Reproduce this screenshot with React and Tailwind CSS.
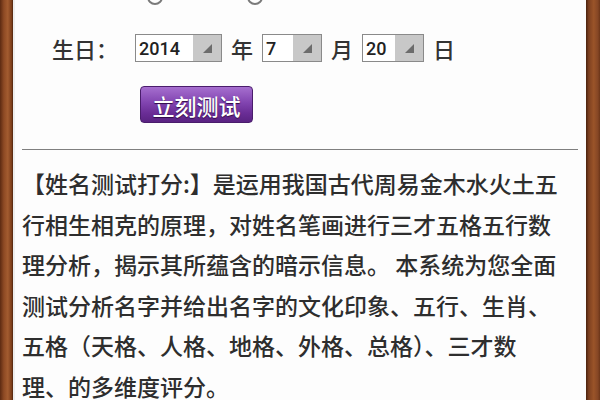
import React from "react";

const Wood = ({ side }) => (
  <div
    className={
      side === "left"
        ? "w-[13px] h-full shrink-0 bg-[linear-gradient(90deg,#5c2a12,#8e4a24_30%,#a35c30_60%,#7a3c1a_90%,#4a220e)]"
        : "w-[14px] h-full shrink-0 bg-[linear-gradient(90deg,#4a220e,#7e4020_20%,#9a5429_55%,#854625_85%,#6a3418)]"
    }
  />
);

const DropBox = ({ value, textW }) => (
  <div className="flex h-[28px] border border-[#8a8a8a] bg-white">
    <div
      className={`${textW} flex items-center pl-[3px] text-[18px] text-[#222] font-['Roboto','Open_Sans',sans-serif]`}
    >
      {value}
    </div>
    <div className="w-[28px] bg-[#c8c8c8] flex items-center justify-center">
      <svg width="9" height="9" viewBox="0 0 9 9">
        <polygon points="9,0 9,9 0,9" fill="#6c6c6c" />
      </svg>
    </div>
  </div>
);

const App = () => {
  const lines = [
    "【姓名测试打分:】是运用我国古代周易金木水火土五",
    "行相生相克的原理，对姓名笔画进行三才五格五行数",
    "理分析，揭示其所蕴含的暗示信息。 本系统为您全面",
    "测试分析名字并给出名字的文化印象、五行、生肖、",
    "五格（天格、人格、地格、外格、总格）、三才数",
    "理、的多维度评分。",
  ];

  return (
    <div className="w-[600px] h-[400px] flex overflow-hidden bg-white font-['Noto_Sans_CJK_SC',sans-serif]">
      <Wood side="left" />
      <div className="flex-1 flex flex-col bg-[#fdfdfd] border-l-2 border-[#eeeeee] overflow-hidden">
        {/* radio row, mostly scrolled off */}
        <div className="shrink-0 flex h-[16px] -mt-[11px] pl-[132px]">
          <div className="w-[16px] h-[16px] rounded-full border-2 border-[#7a7a7a]" />
          <div className="w-[16px] h-[16px] rounded-full border-2 border-[#7a7a7a] ml-[84px]" />
        </div>

        {/* birthday row */}
        <div className="shrink-0 flex items-center h-[28px] mt-[29px] pl-[37px] text-[22px] text-[#333] font-medium">
          <span className="w-[83px]">生日：</span>
          <DropBox value="2014" textW="w-[57px]" />
          <span className="mx-[9px]">年</span>
          <DropBox value="7" textW="w-[30px]" />
          <span className="mx-[9px]">月</span>
          <DropBox value="20" textW="w-[32px]" />
          <span className="mx-[9px]">日</span>
        </div>

        {/* button */}
        <div className="shrink-0 mt-[24px] pl-[125px]">
          <button className="w-[113px] h-[37px] rounded-[4px] border border-[#4a1d6c] bg-[linear-gradient(180deg,#a66fcf,#8144b0_45%,#6a2d96_75%,#5a2382)] text-white text-[22px] font-medium leading-none [text-shadow:0_1px_1px_#2e0b45]">
            立刻测试
          </button>
        </div>

        {/* divider */}
        <div className="shrink-0 mt-[26px] ml-[7px] mr-[8px] h-px bg-[#7f7f7f]" />

        {/* description */}
        <div className="shrink-0 mt-[13px] pl-[7px] text-[23px] leading-[40.5px] text-[#2e2e2e] font-medium whitespace-nowrap">
          {lines.map((line, i) => (
            <div key={i}>{line}</div>
          ))}
        </div>
      </div>
      <Wood side="right" />
    </div>
  );
};

export default App;
